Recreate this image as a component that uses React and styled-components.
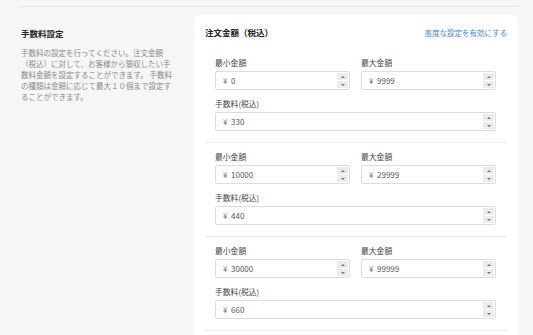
import React from "react";
import styled, { createGlobalStyle } from "styled-components";

const GlobalStyle = createGlobalStyle`
  body {
    margin: 0;
    background: #f6f6f6;
    font-family: "Noto Sans CJK JP", "Noto Sans", sans-serif;
  }
`;

const tiers = [
  { min: "0", max: "9999", fee: "330" },
  { min: "10000", max: "29999", fee: "440" },
  { min: "30000", max: "99999", fee: "660" },
];

function NumberField({ value }) {
  return (
    <Input>
      <Yen>¥</Yen>
      <span>{value}</span>
      <Spinner>
        <SpinButton>
          <Arrow up />
        </SpinButton>
        <SpinButton>
          <Arrow />
        </SpinButton>
      </Spinner>
    </Input>
  );
}

function App() {
  return (
    <>
      <GlobalStyle />
      <Page>
        <Row>
          <Side>
            <SideTitle>手数料設定</SideTitle>
            <SideText>
              手数料の設定を行ってください。注文金額（税込）に対して、お客様から領収したい手数料金額を設定することができます。
              手数料の種類は金額に応じて最大１０個まで設定することができます。
            </SideText>
          </Side>
          <Card>
            <CardHead>
              <CardTitle>注文金額（税込）</CardTitle>
              <Link href="#">高度な設定を有効にする</Link>
            </CardHead>
            {tiers.map((t) => (
              <Group key={t.min}>
                <Pair>
                  <Field>
                    <Label>最小金額</Label>
                    <NumberField value={t.min} />
                  </Field>
                  <Field>
                    <Label>最大金額</Label>
                    <NumberField value={t.max} />
                  </Field>
                </Pair>
                <Field>
                  <Label>手数料(税込)</Label>
                  <NumberField value={t.fee} />
                </Field>
              </Group>
            ))}
          </Card>
        </Row>
      </Page>
    </>
  );
}

export default App;

const Page = styled.div`
  padding: 6px 15px 0 20px;
`;

const Row = styled.div`
  display: flex;
  border-top: 1px solid #e6e6e6;
  padding-top: 8px;
  gap: 22px;
`;

const Side = styled.div`
  width: 151px;
  padding: 12px 0 0 1px;
  flex-shrink: 0;
`;

const SideTitle = styled.div`
  font-size: 8.5px;
  line-height: 12px;
  font-weight: 700;
  color: #222;
`;

const SideText = styled.p`
  margin: 8px 0 0;
  font-size: 7.5px;
  line-height: 11px;
  color: #8a8a8a;
`;

const Card = styled.div`
  flex: 1;
  background: #fff;
  border-radius: 5px;
  padding: 11px 11px 20px;
  height: 330px;
`;

const CardHead = styled.div`
  display: flex;
  justify-content: space-between;
  align-items: center;
  height: 12px;
  margin-bottom: 11px;
`;

const CardTitle = styled.div`
  font-size: 8.5px;
  font-weight: 700;
  color: #222;
`;

const Link = styled.a`
  font-size: 7.5px;
  color: #4a86d8;
  text-decoration: none;
`;

const Group = styled.div`
  display: flex;
  flex-direction: column;
  gap: 9px;
  padding: 9px 11px 11px 10px;
  border-bottom: 1px solid #ececec;
`;

const Pair = styled.div`
  display: grid;
  grid-template-columns: 1fr 1fr;
  gap: 11px;
`;

const Field = styled.div`
  display: flex;
  flex-direction: column;
`;

const Label = styled.div`
  font-size: 7.8px;
  line-height: 10px;
  color: #444;
  margin-bottom: 3px;
`;

const Input = styled.div`
  position: relative;
  display: flex;
  align-items: center;
  height: 19px;
  box-sizing: border-box;
  border: 1px solid #dcdcdc;
  border-radius: 2px;
  padding-left: 7px;
  font-size: 8px;
  color: #555;
`;

const Yen = styled.span`
  width: 8px;
  color: #777;
`;

const Spinner = styled.div`
  position: absolute;
  right: 1px;
  top: 1px;
  bottom: 1px;
  width: 11px;
  display: flex;
  flex-direction: column;
  gap: 1px;
`;

const SpinButton = styled.div`
  flex: 1;
  background: #ebebeb;
  display: flex;
  align-items: center;
  justify-content: center;
`;

const Arrow = styled.span`
  width: 0;
  height: 0;
  border-left: 2px solid transparent;
  border-right: 2px solid transparent;
  ${(p) =>
    p.up
      ? "border-bottom: 2px solid #777;"
      : "border-top: 2px solid #777;"}
`;
